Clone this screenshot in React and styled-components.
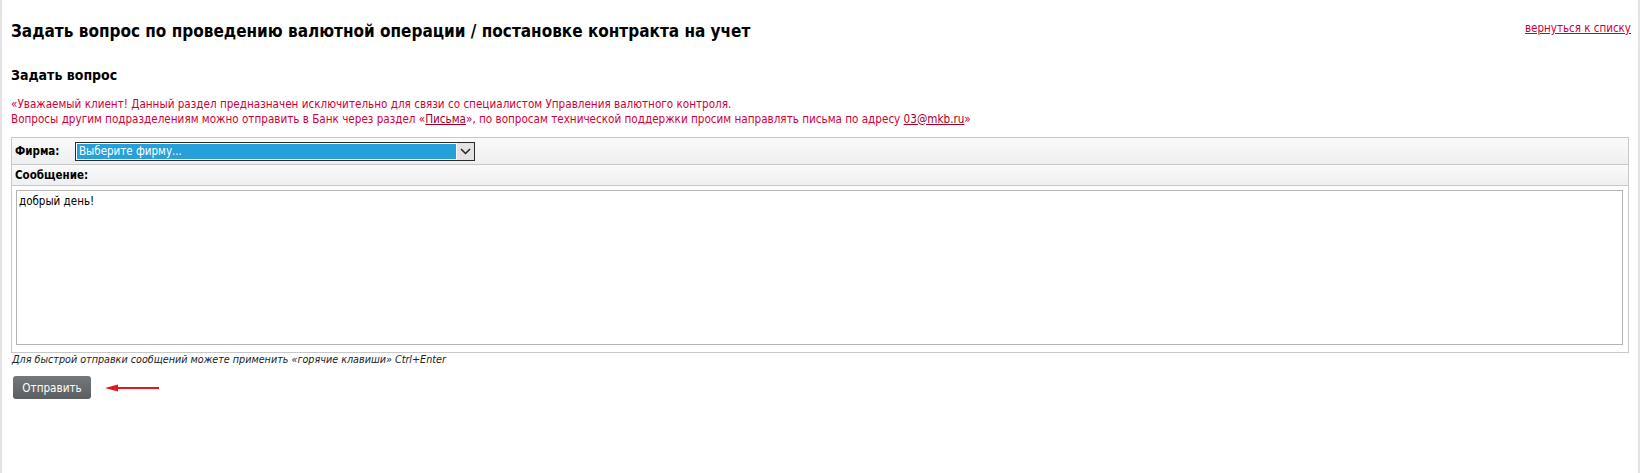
import React from 'react'
import styled, { createGlobalStyle } from 'styled-components'

const GlobalStyle = createGlobalStyle`
  body {
    margin: 0;
    background: #fff;
    font-family: "DejaVu Sans Condensed", "DejaVu Sans", sans-serif;
    font-size: 11.5px;
    color: #000;
  }
`;

const Page = styled.div`
  width: 1640px;
  min-height: 473px;
  box-sizing: border-box;
  border-left: 2px solid #e2e2e2;
  border-right: 2px solid #e2e2e2;
  padding: 20px 0 0 9px;
`;

const Content = styled.div`
  width: 1618px;
`;

const Header = styled.div`
  display: flex;
  align-items: flex-start;
  justify-content: space-between;
`;

const Title = styled.h1`
  margin: 0;
  font-size: 17px;
  font-weight: bold;
  line-height: 22px;
`;

const BackLink = styled.a`
  color: #c8003c;
  text-decoration: underline;
  font-size: 11.5px;
  line-height: 14px;
  margin-top: 1px;
  margin-right: -2px;
`;

const SubTitle = styled.h2`
  margin: 24px 0 0;
  font-size: 14px;
  font-weight: bold;
  line-height: 18px;
`;

const Notice = styled.p`
  margin: 13px 0 0;
  color: #d0003a;
  font-size: 11.6px;
  line-height: 14.5px;
`;

const NoticeLink = styled.a`
  color: #a0002c;
  text-decoration: underline;
`;

const Form = styled.div`
  margin-top: 11px;
  border: 1px solid #c8c8c8;
`;

const LabelRow = styled.div`
  display: flex;
  align-items: center;
  height: ${p => p.height}px;
  padding-left: 3px;
  background: linear-gradient(#fafafa, #eeeff0);
  border-bottom: 1px solid #c8c8c8;
`;

const Label = styled.span`
  font-weight: bold;
  font-size: 11.5px;
  width: ${p => p.width || 'auto'};
  flex-shrink: 0;
`;

const Select = styled.div`
  display: flex;
  width: 400px;
  height: 19px;
  box-sizing: border-box;
  border: 1px solid #2b2b2b;
  background: #fff;
`;

const SelectValue = styled.div`
  flex: 1;
  margin: 1px;
  padding-left: 2px;
  background: #26a0da;
  color: #fff;
  font-size: 11.5px;
  line-height: 15px;
`;

const SelectArrow = styled.div`
  width: 17px;
  display: flex;
  align-items: center;
  justify-content: center;
  background: #e3e3e3;
`;

const MessageCell = styled.div`
  padding: 4px 5px 7px 4px;
  background: #fff;
`;

const TextArea = styled.textarea`
  display: block;
  width: 100%;
  height: 155px;
  box-sizing: border-box;
  border: 1px solid #b4b4b4;
  padding: 3px 2px;
  margin: 0;
  resize: none;
  font-family: "DejaVu Sans Condensed", "DejaVu Sans", sans-serif;
  font-size: 11.5px;
  color: #000;
  outline: none;
`;

const Hint = styled.div`
  font-style: italic;
  font-size: 10.7px;
  line-height: 14px;
  color: #222;
  padding-left: 1px;
`;

const Actions = styled.div`
  display: flex;
  align-items: center;
  margin-top: 9px;
  gap: 14px;
`;

const Button = styled.button`
  height: 23px;
  width: 78px;
  padding: 0;
  margin-left: 2px;
  border: none;
  border-radius: 3px;
  background: linear-gradient(#74787a, #5b5f61);
  color: #fff;
  font-family: "DejaVu Sans Condensed", "DejaVu Sans", sans-serif;
  font-size: 11.6px;
  cursor: pointer;
`;

const App = () => {
  return (
    <>
      <GlobalStyle />
      <Page>
        <Content>
          <Header>
            <Title>Задать вопрос по проведению валютной операции / постановке контракта на учет</Title>
            <BackLink href="#">вернуться к списку</BackLink>
          </Header>
          <SubTitle>Задать вопрос</SubTitle>
          <Notice>
            «Уважаемый клиент! Данный раздел предназначен исключительно для связи со специалистом Управления валютного контроля.<br />
            Вопросы другим подразделениям можно отправить в Банк через раздел «<NoticeLink href="#">Письма</NoticeLink>», по вопросам технической поддержки просим направлять письма по адресу <NoticeLink href="#">03@mkb.ru</NoticeLink>»
          </Notice>
          <Form>
            <LabelRow height={26}>
              <Label width="60px">Фирма:</Label>
              <Select>
                <SelectValue>Выберите фирму...</SelectValue>
                <SelectArrow>
                  <svg width="11" height="7" viewBox="0 0 11 7">
                    <path d="M1 1l4.5 4.5L10 1" fill="none" stroke="#222" strokeWidth="1.5" />
                  </svg>
                </SelectArrow>
              </Select>
            </LabelRow>
            <LabelRow height={20}>
              <Label>Сообщение:</Label>
            </LabelRow>
            <MessageCell>
              <TextArea defaultValue="добрый день!" />
            </MessageCell>
          </Form>
          <Hint>Для быстрой отправки сообщений можете применить «горячие клавиши» Ctrl+Enter</Hint>
          <Actions>
            <Button>Отправить</Button>
            <svg width="54" height="8" viewBox="0 0 54 8">
              <path d="M54 4H10" stroke="#e8161b" strokeWidth="2" />
              <path d="M0 4L13 0.5V7.5Z" fill="#e8161b" />
            </svg>
          </Actions>
        </Content>
      </Page>
    </>
  )
}

export default App
